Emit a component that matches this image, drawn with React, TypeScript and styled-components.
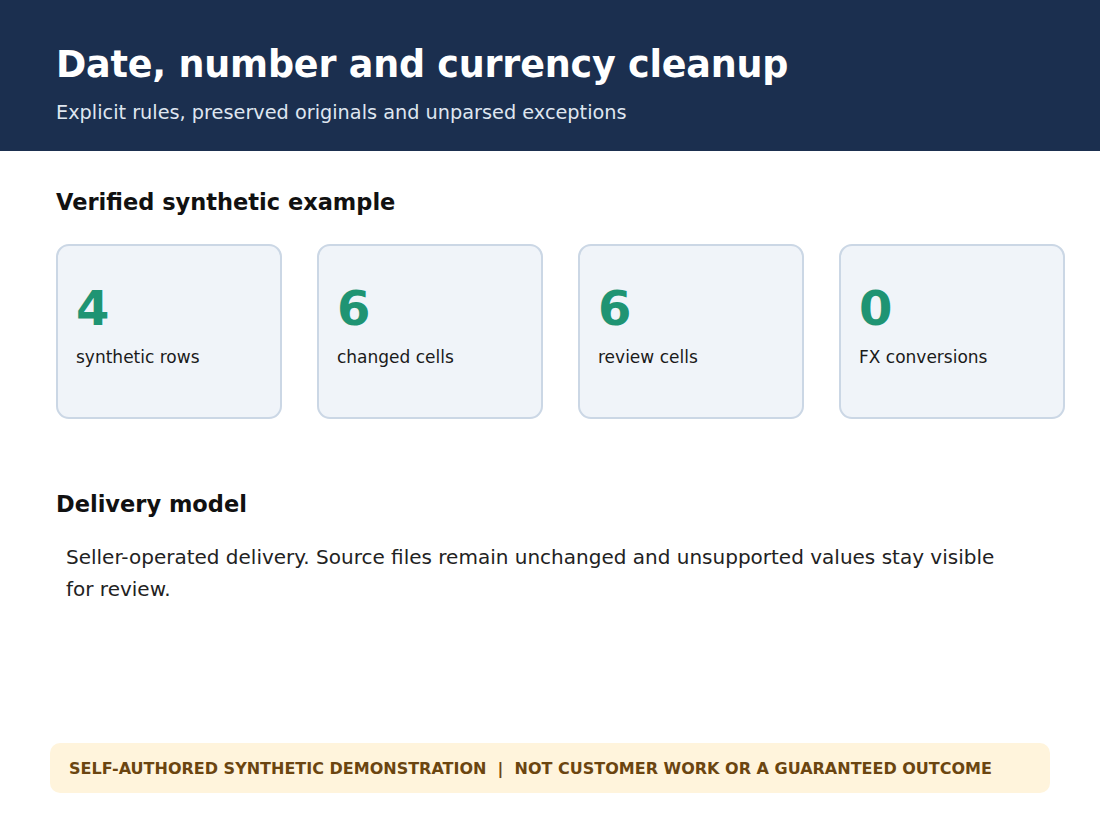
import styled, { createGlobalStyle } from "styled-components";

const GlobalStyle = createGlobalStyle`
    html, body { margin: 0; padding: 0; background: #ffffff; }
    body { font-family: "DejaVu Sans", Verdana, sans-serif; color: #111111; }
`;

const Header = styled.header`
    background: #1b2f4f;
    height: 151px;
    box-sizing: border-box;
    padding: 40px 56px 0;
    color: #ffffff;
`;

const Title = styled.h1`
    margin: 0;
    font-size: 36.5px;
    font-weight: 700;
    line-height: 50px;
    letter-spacing: -0.2px;
`;

const Subtitle = styled.p`
    margin: 11px 0 0;
    font-size: 19.3px;
    color: #dfe6f0;
`;

const Main = styled.main`
    padding: 36px 34px 0 56px;
`;

const SectionHeading = styled.h2`
    margin: 0;
    font-size: 22.5px;
    font-weight: 700;
    line-height: 30px;
`;

const CardGrid = styled.div`
    display: grid;
    grid-template-columns: repeat(4, 226px);
    gap: 35px;
    margin-top: 27px;
`;

const Card = styled.div`
    height: 175px;
    box-sizing: border-box;
    background: #f0f4f9;
    border: 2px solid #cbd7e5;
    border-radius: 13px;
    padding: 32px 18px;
`;

const CardValue = styled.div`
    font-size: 48px;
    font-weight: 700;
    color: #1f9473;
    line-height: 60px;
`;

const CardLabel = styled.div`
    margin-top: 9px;
    font-size: 17px;
    color: #1a1a1a;
`;

const DeliverySection = styled.section`
    margin-top: 70px;
`;

const Paragraph = styled.p`
    margin: 22px 0 0 10px;
    max-width: 945px;
    font-size: 20px;
    line-height: 32px;
    color: #222222;
`;

const Banner = styled.div`
    margin: 138px 50px 0 50px;
    height: 50px;
    display: flex;
    align-items: center;
    padding: 0 19px;
    background: #fff4dc;
    border-radius: 10px;
    color: #6b4510;
    font-size: 16px;
    font-weight: 700;
    white-space: pre;
`;

const stats = [
    { value: "4", label: "synthetic rows" },
    { value: "6", label: "changed cells" },
    { value: "6", label: "review cells" },
    { value: "0", label: "FX conversions" },
];

export default function App() {
    return (
        <>
            <GlobalStyle />
            <Header>
                <Title>Date, number and currency cleanup</Title>
                <Subtitle>Explicit rules, preserved originals and unparsed exceptions</Subtitle>
            </Header>
            <Main>
                <SectionHeading>Verified synthetic example</SectionHeading>
                <CardGrid>
                    {stats.map(s => (
                        <Card key={s.label}>
                            <CardValue>{s.value}</CardValue>
                            <CardLabel>{s.label}</CardLabel>
                        </Card>
                    ))}
                </CardGrid>
                <DeliverySection>
                    <SectionHeading>Delivery model</SectionHeading>
                    <Paragraph>
                        Seller-operated delivery. Source files remain unchanged and unsupported values stay visible for review.
                    </Paragraph>
                </DeliverySection>
            </Main>
            <Banner>SELF-AUTHORED SYNTHETIC DEMONSTRATION  |  NOT CUSTOMER WORK OR A GUARANTEED OUTCOME</Banner>
        </>
    );
}
